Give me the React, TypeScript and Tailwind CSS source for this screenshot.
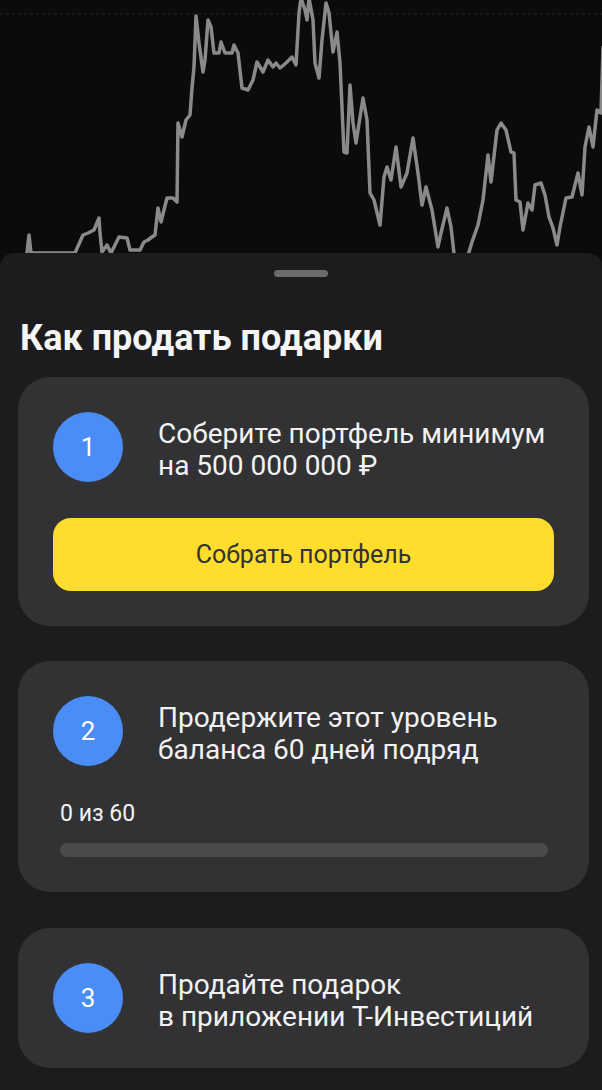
import React from "react";

const pts: [number, number][] = [
  [0, 262], [24, 262], [27, 253], [29, 235], [31, 253], [48, 253], [75, 253], [83, 235], [88, 233], [94, 230], [99, 218], [100, 233], [102, 252],
  [107, 245], [111, 253], [119, 237], [127, 238], [130, 250], [140, 250], [144, 242], [148, 240], [152, 237], [155, 235],
  [158, 208], [161, 222], [167, 198], [173, 198], [177, 202], [178, 123], [182, 137], [186, 120], [190, 115], [192, 88],
  [194, 67], [196, 16], [199, 43], [203, 72], [205, 60], [208, 20], [211, 27], [214, 53], [219, 53], [221, 42], [225, 53],
  [232, 53], [234, 45], [238, 53], [242, 88], [248, 90], [253, 80], [257, 62], [263, 72], [268, 60], [273, 67], [276, 63],
  [280, 68], [286, 63], [292, 57], [296, 65], [299, 13], [301, -2], [305, 10], [307, 20], [309, -2], [313, 20], [315, 63],
  [319, 78], [322, 40], [326, 3], [329, 13], [333, 52], [337, 32], [340, 63], [344, 152], [347, 153], [350, 85], [353, 123],
  [356, 143], [363, 98], [367, 120], [370, 193], [374, 200], [380, 225], [384, 177], [387, 167], [391, 180], [396, 147],
  [401, 187], [407, 173], [413, 138], [418, 173], [422, 205], [426, 187], [432, 210], [438, 247], [441, 233], [447, 208],
  [451, 227], [455, 262], [466, 262], [472, 242], [478, 225], [483, 200], [488, 155], [491, 182], [497, 130], [501, 123],
  [506, 130], [511, 152], [514, 153], [516, 200], [520, 202], [523, 230], [528, 203], [532, 210], [535, 185], [541, 183],
  [545, 195], [549, 217], [553, 228], [557, 245], [560, 227], [566, 198], [572, 197], [578, 173], [582, 195], [585, 147],
  [589, 127], [593, 147], [597, 110], [601, 113], [603, 47],
];

function Chart() {
  const d = pts.map((p) => p.join(",")).join(" ");
  return (
    <svg width="602" height="253" viewBox="0 0 602 253" className="block">
      <line x1="0" y1="14" x2="602" y2="14" stroke="#262626" strokeWidth="1" strokeDasharray="3 3" />
      <polyline points={d} fill="none" stroke="#8a8a8a" strokeWidth="3.5" strokeLinejoin="round" strokeLinecap="round" />
    </svg>
  );
}

function Circle({ n }: { n: string }) {
  return (
    <div className="w-[70px] h-[70px] shrink-0 rounded-full bg-[#4a8df6] flex items-center justify-center text-white text-[26px] leading-none">
      {n}
    </div>
  );
}

function Step({ n, lines }: { n: string; lines: string[] }) {
  return (
    <div className="flex items-center gap-[35px]">
      <Circle n={n} />
      <div className="pt-[6px] text-[28px] leading-[32px] text-[#f2f2f2]">
        {lines.map((l) => (
          <div key={l}>{l}</div>
        ))}
      </div>
    </div>
  );
}

export default function App() {
  return (
    <div className="w-[602px] h-[1090px] bg-[#0b0b0b] overflow-hidden" style={{ fontFamily: "Roboto, 'Noto Sans', sans-serif" }}>
      <Chart />
      <div className="bg-[#1c1c1e] rounded-t-[14px] h-[837px] pl-[18px] flex flex-col">
        <div className="flex justify-center pt-[17px] pr-[18px]">
          <div className="w-[54px] h-[7px] rounded-full bg-[#6b6b6d]" />
        </div>
        <h1 className="mt-[40px] pl-[2px] text-[36px] leading-[42px] font-bold text-[#f5f5f5]">Как продать подарки</h1>
        <div className="mt-[18px] w-[571px] flex flex-col">
          <div className="bg-[#323234] rounded-[32px] p-[35px] flex flex-col gap-[36px]">
            <Step n="1" lines={["Соберите портфель минимум", "на 500 000 000 ₽"]} />
            <button className="h-[73px] rounded-[18px] bg-[#ffdd2d] text-[#333333] text-[25px]">Собрать портфель</button>
          </div>
          <div className="mt-[35px] bg-[#323234] rounded-[32px] p-[35px] pr-[41px] flex flex-col">
            <Step n="2" lines={["Продержите этот уровень", "баланса 60 дней подряд"]} />
            <div className="mt-[35px] pl-[7px] text-[23px] leading-[26px] text-[#f2f2f2]">0 из 60</div>
            <div className="mt-[16px] ml-[7px] h-[14px] rounded-full bg-[#4a4a4d]" />
          </div>
          <div className="mt-[36px] bg-[#323234] rounded-[32px] p-[35px]">
            <Step n="3" lines={["Продайте подарок", "в приложении Т-Инвестиций"]} />
          </div>
        </div>
      </div>
    </div>
  );
}
